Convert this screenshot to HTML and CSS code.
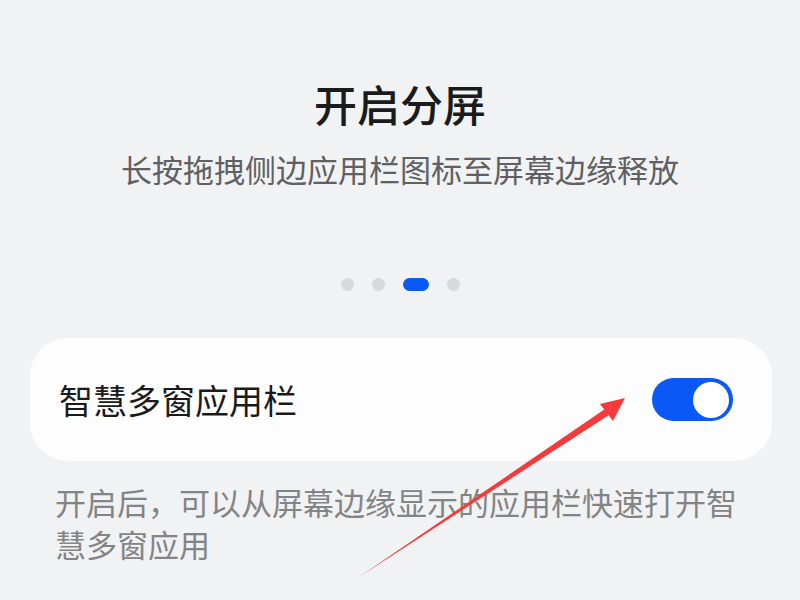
FILE: index.html
```html
<!DOCTYPE html>
<html lang="zh-CN">
<head>
<meta charset="utf-8">
<link rel="stylesheet" href="styles.css">
</head>
<body>
<div class="page">
  <h1 class="title">开启分屏</h1>
  <p class="subtitle">长按拖拽侧边应用栏图标至屏幕边缘释放</p>
  <div class="dots">
    <span class="dot"></span>
    <span class="dot"></span>
    <span class="dot active"></span>
    <span class="dot"></span>
  </div>
  <div class="card">
    <span class="card-label">智慧多窗应用栏</span>
    <span class="switch"><span class="knob"></span></span>
  </div>
  <p class="note">开启后，可以从屏幕边缘显示的应用栏快速打开智慧多窗应用</p>
  <svg class="arrow" width="800" height="600" viewBox="0 0 800 600">
    <polygon points="359,577 605,409 609,415" fill="#f43b3b"/>
    <polygon points="625,398 600,404 613,421" fill="#f43b3b"/>
  </svg>
</div>
</body>
</html>
```
FILE: styles.css
```css
html, body {
  margin: 0;
  padding: 0;
}
body {
  background: #f1f2f4;
  font-family: "Noto Sans CJK SC", "Noto Sans", sans-serif;
  width: 800px;
  height: 600px;
  overflow: hidden;
}
.page {
  position: relative;
  display: flex;
  flex-direction: column;
  align-items: center;
  padding-top: 75px;
  height: 600px;
  box-sizing: border-box;
}
.title {
  margin: 0;
  font-size: 43px;
  line-height: 56px;
  font-weight: 500;
  color: #1b1b1b;
}
.subtitle {
  margin: 16px 0 0;
  font-size: 31px;
  line-height: 44px;
  color: #5f6062;
}
.dots {
  margin-top: 87px;
  display: flex;
  gap: 18px;
  align-items: center;
  height: 13px;
}
.dot {
  width: 13px;
  height: 13px;
  border-radius: 7px;
  background: #d8d9db;
}
.dot.active {
  width: 26px;
  background: #0a59f7;
}
.card {
  margin-top: 47px;
  align-self: stretch;
  margin-left: 30px;
  margin-right: 28px;
  height: 123px;
  background: #fdfdfd;
  border-radius: 38px;
  display: flex;
  align-items: center;
  justify-content: space-between;
  padding: 0 39px 0 29px;
  box-sizing: border-box;
}
.card-label {
  font-size: 34px;
  color: #1a1a1a;
}
.switch {
  width: 81px;
  height: 43px;
  border-radius: 22px;
  background: #0a59f7;
  display: flex;
  align-items: center;
  justify-content: flex-end;
  padding-right: 4px;
  box-sizing: border-box;
}
.knob {
  width: 36px;
  height: 36px;
  border-radius: 50%;
  background: #ffffff;
}
.note {
  margin: 20px 0 0;
  align-self: stretch;
  padding: 0 56px 0 55px;
  font-size: 31px;
  line-height: 42px;
  color: #838486;
}
.arrow {
  position: absolute;
  left: 0;
  top: 0;
  pointer-events: none;
}
```
